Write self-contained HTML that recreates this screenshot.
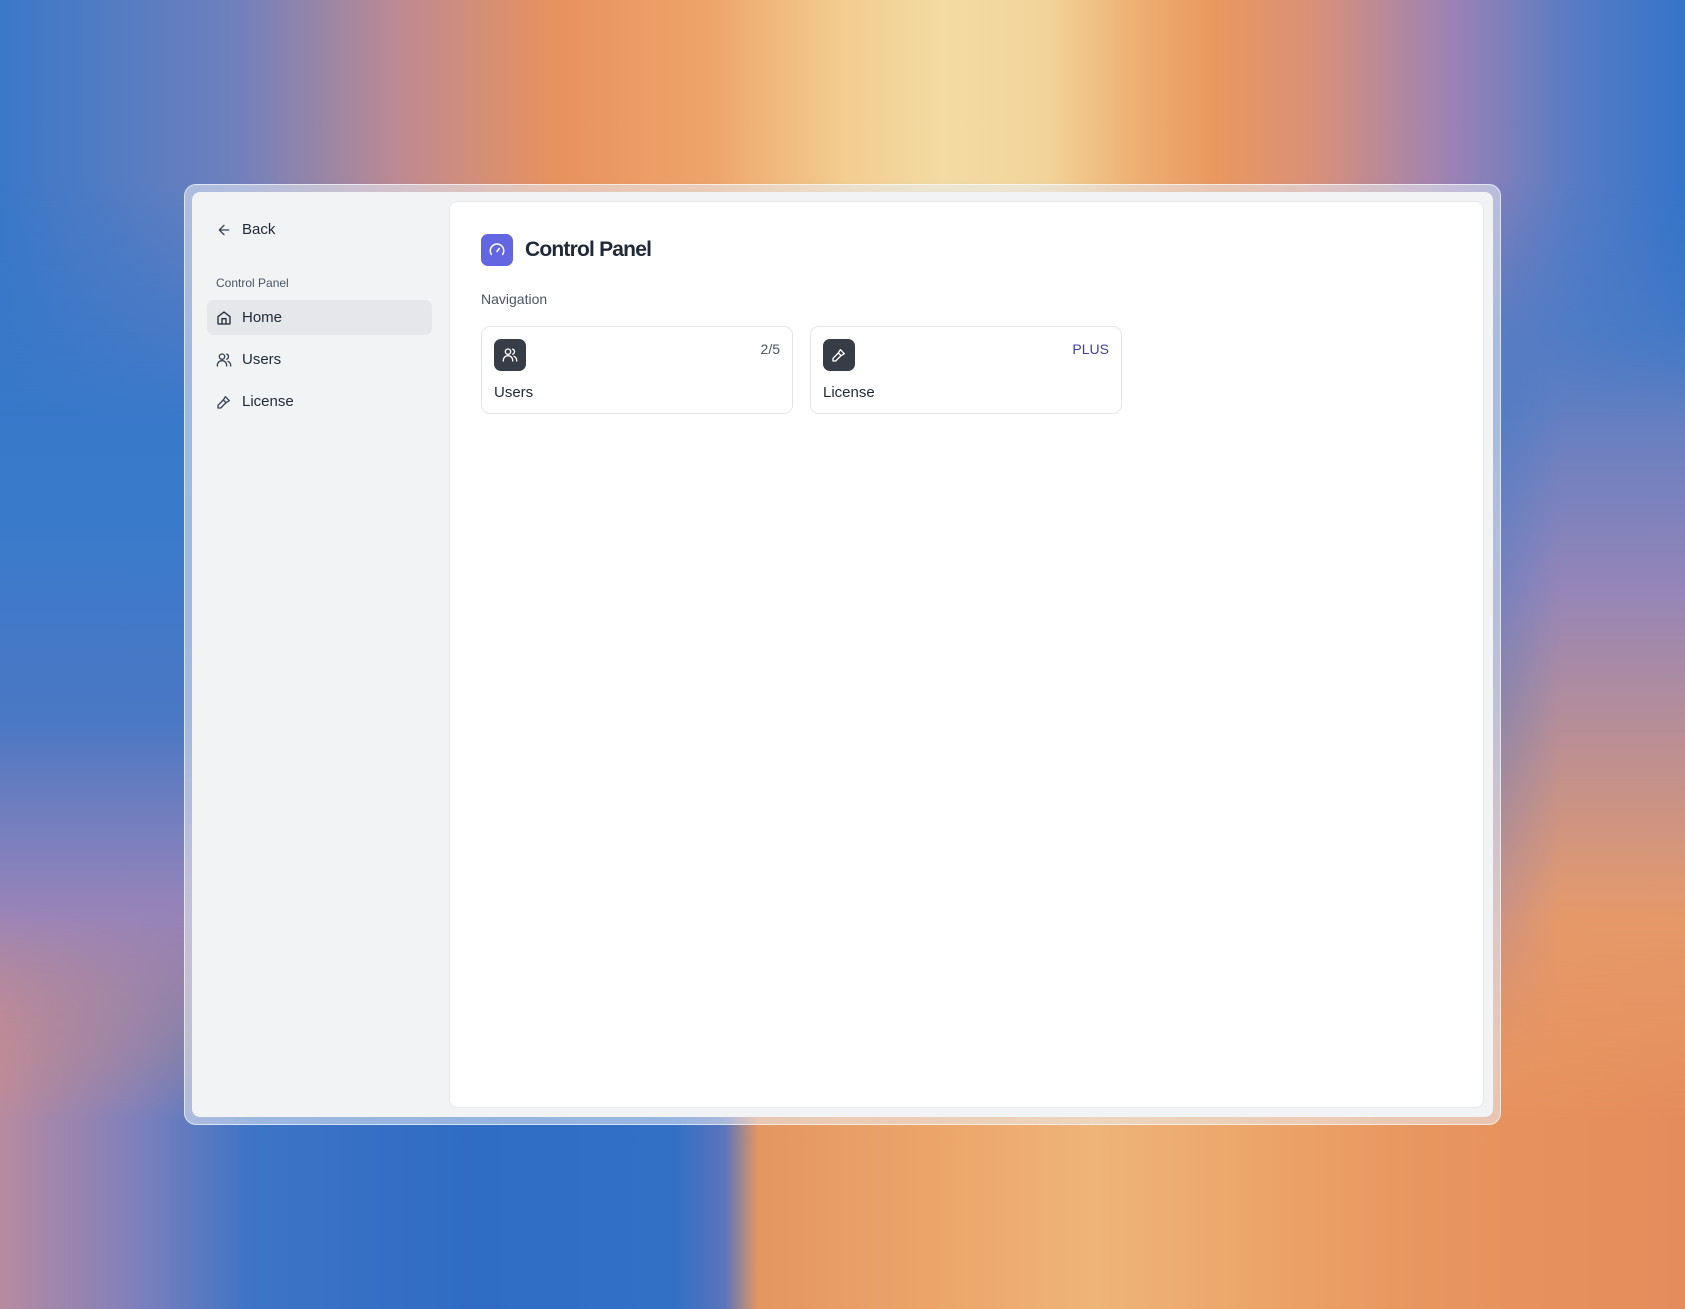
<!DOCTYPE html>
<html><head><meta charset="utf-8"><style>
*{box-sizing:border-box;margin:0;padding:0}
body{width:1685px;height:1309px;overflow:hidden;font-family:"Liberation Sans",sans-serif;position:relative;background:#3a78c8}
.bg{position:absolute}
.frame{position:absolute;left:184px;top:184px;width:1317px;height:941px;border-radius:12px;background:rgba(235,240,248,.55);border:1px solid rgba(255,255,255,.6)}
.side{position:absolute;left:192px;top:192px;width:1301px;height:925px;border-radius:8px;background:#f1f3f5}
.main{position:absolute;left:449px;top:201px;width:1035px;height:907px;background:#fff;border-radius:8px;border:1px solid #e6e8eb}
.t{position:absolute;color:#1f2937;font-size:15px}
.row{position:absolute;left:207px;width:225px;height:35px;border-radius:7px}
svg{position:absolute}
.card{position:absolute;top:326px;width:312px;height:88px;border:1px solid #e3e5e8;border-radius:9px;background:#fff}
.ic{position:absolute;left:12px;top:12px;width:32px;height:32px;border-radius:7px;background:#373d47}
</style></head><body>
<div class="bg" style="left:0;top:0;width:1685px;height:1309px;background:linear-gradient(180deg,#3475c8 0%,#3a7acb 40%,#4a78c4 55%,#9a84b8 70%,#e2906a 85%,#b88aa0 100%)"></div>
<div class="bg" style="left:0;top:0;width:1685px;height:1309px;background:linear-gradient(180deg,#3474c9 0%,#4a7cc6 25%,#9585b8 45%,#e69a6a 70%,#eaa068 100%);-webkit-mask-image:linear-gradient(90deg,transparent 1380px,#000 1560px);mask-image:linear-gradient(90deg,transparent 1380px,#000 1560px)"></div>
<div class="bg" style="left:0;top:0;width:1685px;height:420px;background:linear-gradient(90deg,#3a78c8 0%,#6f80bd 14%,#c08a90 24%,#e8925e 33%,#eea468 42%,#f3cc90 50%,#f3dba2 56%,#f2d49a 62%,#eeb274 67%,#e9985e 72%,#d9907a 78%,#9c82b4 86%,#5a7cc4 93%,#3474c9 100%);-webkit-mask-image:linear-gradient(180deg,#000 180px,transparent 420px);mask-image:linear-gradient(180deg,#000 180px,transparent 420px)"></div>
<div class="bg" style="left:0;top:900px;width:1685px;height:409px;background:linear-gradient(90deg,#b88aa0 0%,#7f80bc 8%,#3d74c6 15%,#2f6cc4 28%,#3270c6 40%,#5a74bc 43%,#e49760 45%,#eca468 55%,#efb478 65%,#eca468 75%,#e8955e 85%,#e58c5c 100%);-webkit-mask-image:linear-gradient(180deg,transparent 0,#000 220px);mask-image:linear-gradient(180deg,transparent 0,#000 220px)"></div>
<div class="frame"></div>
<div class="side"></div>
<svg style="left:216px;top:222px" width="16" height="16" viewBox="0 0 24 24" fill="none" stroke="#374151" stroke-width="2" stroke-linecap="round" stroke-linejoin="round"><path d="M19 12H5M12 19l-7-7 7-7"/></svg>
<div class="t" style="left:242px;top:221px">Back</div>
<div class="t" style="left:216px;top:276px;font-size:12px;color:#4b5563">Control Panel</div>
<div class="row" style="top:300px;background:#e5e7ea"></div>
<svg style="left:216px;top:310px" width="16" height="16" viewBox="0 0 24 24" fill="none" stroke="#1f2937" stroke-width="2" stroke-linecap="round" stroke-linejoin="round"><path d="M3 10l9-7 9 7v10a1 1 0 0 1-1 1H4a1 1 0 0 1-1-1z"/><path d="M9 21v-8h6v8"/></svg>
<div class="t" style="left:242px;top:309px">Home</div>
<svg style="left:216px;top:352px" width="16" height="16" viewBox="0 0 24 24" fill="none" stroke="#374151" stroke-width="2" stroke-linecap="round"><circle cx="9" cy="7" r="4"/><path d="M2 21v-1a7 7 0 0 1 14 0v1M16 3.2a4 4 0 0 1 0 7.6M22 21v-1a7 7 0 0 0-4-6"/></svg>
<div class="t" style="left:242px;top:351px">Users</div>
<svg style="left:216px;top:394px" width="16" height="16" viewBox="0 0 24 24" fill="none" stroke="#374151" stroke-width="2" stroke-linecap="round" stroke-linejoin="round"><path d="M14 4l6 6-5 3-4-4z"/><path d="M11 9l-8 8v4h4l8-8"/></svg>
<div class="t" style="left:242px;top:393px">License</div>
<div class="main">
 <div style="position:absolute;left:31px;top:32px;width:32px;height:32px;border-radius:7px;background:#6366e1"></div>
 <svg style="left:38px;top:39px" width="18" height="18" viewBox="0 0 24 24" fill="none" stroke="#fff" stroke-width="2" stroke-linecap="round"><path d="M4.5 18a9 9 0 1 1 15 0"/><path d="M12 14l3-4"/></svg>
 <div class="t" style="left:75px;top:36px;font-size:21px;font-weight:bold;letter-spacing:-.8px">Control Panel</div>
 <div class="t" style="left:31px;top:89px;font-size:14px;color:#4b5563">Navigation</div>
</div>
<div class="card" style="left:481px">
 <div class="ic"></div>
 <svg style="left:20px;top:20px" width="16" height="16" viewBox="0 0 24 24" fill="none" stroke="#fff" stroke-width="2" stroke-linecap="round"><circle cx="9" cy="7" r="4"/><path d="M2 21v-1a7 7 0 0 1 14 0v1M16 3.2a4 4 0 0 1 0 7.6M22 21v-1a7 7 0 0 0-4-6"/></svg>
 <div class="t" style="right:12px;top:14px;font-size:14px;color:#4b5563">2/5</div>
 <div class="t" style="left:12px;top:57px;font-size:15px">Users</div>
</div>
<div class="card" style="left:810px">
 <div class="ic"></div>
 <svg style="left:20px;top:20px" width="16" height="16" viewBox="0 0 24 24" fill="none" stroke="#fff" stroke-width="2" stroke-linecap="round" stroke-linejoin="round"><path d="M14 4l6 6-5 3-4-4z"/><path d="M11 9l-8 8v4h4l8-8"/></svg>
 <div class="t" style="right:12px;top:14px;font-size:14px;color:#3f3fa8">PLUS</div>
 <div class="t" style="left:12px;top:57px;font-size:15px">License</div>
</div>
</body></html>
